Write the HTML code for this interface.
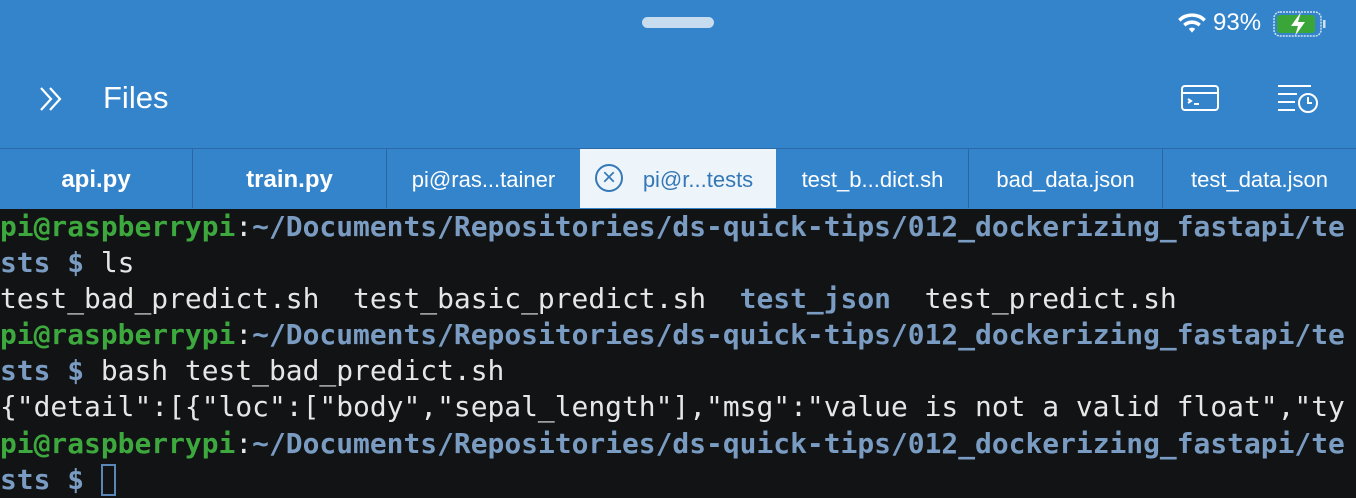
<!DOCTYPE html>
<html><head><style>
body{margin:0;width:1356px;height:495px;overflow:hidden;background:#111314;font-family:"Liberation Sans",sans-serif}
.top{position:absolute;left:0;top:0;width:1356px;height:148px;background:#3484cc}
.handle{position:absolute;left:642px;top:17px;width:72px;height:11px;border-radius:6px;background:#c8dcf0}
.files{position:absolute;left:103px;top:80px;color:#fff;font-size:31px}
.status{position:absolute;left:1213px;top:9px;color:#fff;font-size:24px}
.tabs{position:absolute;left:0;top:148px;width:1356px;height:60px;background:#3484cc;border-top:1px solid #2a6aa6}
.tab{position:absolute;top:0;height:59px;line-height:61px;text-align:center;color:#fff;font-size:22px;border-right:1px solid #2b66a0}
.term{position:absolute;left:0;top:209px;font-family:"DejaVu Sans Mono","Liberation Mono",monospace;font-size:27.93px;line-height:36.1px;color:#e6e6e6;white-space:pre}
.g{color:#3da83d;font-weight:bold}.b{color:#7a9cc2;font-weight:bold}
</style></head><body>
<div class="top">
<div class="handle"></div>
<svg style="position:absolute;left:38px;top:86px" width="28" height="26" viewBox="0 0 28 26" fill="none" stroke="#fff" stroke-width="2.2"><path d="M3 2l10 11-10 11M12 2l10 11-10 11"/></svg>
<div class="files">Files</div>
<svg style="position:absolute;left:1176px;top:11px" width="32" height="24" viewBox="0 0 30 22" fill="#fff"><path d="M15 20l3-3.5a4.5 4.5 0 0 0-6 0z"/><path d="M15 8.5a12 12 0 0 1 8.3 3.3l-2.2 2.5a9 9 0 0 0-12.2 0l-2.2-2.5A12 12 0 0 1 15 8.5z"/><path d="M15 2a18.5 18.5 0 0 1 13 5.2l-2.2 2.5a15 15 0 0 0-21.6 0L2 7.2A18.5 18.5 0 0 1 15 2z"/></svg>
<div class="status">93%</div>
<svg style="position:absolute;left:1273px;top:11px" width="54" height="26" viewBox="0 0 54 26"><rect x="1" y="1" width="47" height="24" rx="6" fill="none" stroke="#cfe0f0" stroke-width="1.5" stroke-dasharray="2 1"/><rect x="4" y="4" width="38" height="18" rx="3" fill="#3aa63a"/><rect x="50" y="9" width="2.5" height="8" fill="#cfe0f0"/><path d="M28 1l-10 14h7l-3 10 10-14h-7z" fill="#fff"/></svg>
<svg style="position:absolute;left:1180px;top:84px" width="40" height="28" viewBox="0 0 40 28" fill="none" stroke="#fff" stroke-width="2"><rect x="2" y="2" width="36" height="24" rx="3"/><path d="M2 9h36M8 15l3 2-3 2M14 20h5"/></svg>
<svg style="position:absolute;left:1277px;top:84px" width="42" height="30" viewBox="0 0 42 30" fill="none" stroke="#fff" stroke-width="2"><path d="M1 2h33M1 10h19M1 18h17M1 26h17"/><circle cx="31" cy="19" r="9"/><path d="M31 13v6h4"/></svg>
</div>
<div class="tabs">
<div class="tab" style="left:0;width:192px;font-size:24px;font-weight:bold;">api.py</div>
<div class="tab" style="left:193px;width:193px;font-size:24px;font-weight:bold;">train.py</div>
<div class="tab" style="left:387px;width:193px">pi@ras...tainer</div>
<div class="tab" style="left:580px;width:196px;background:#eef5fa;color:#3478b8;border-right:none"><span style="position:absolute;left:15px;top:15px;width:28px;height:28px;border:2px solid #3478b8;border-radius:50%;box-sizing:border-box;line-height:23px;font-size:24px;text-align:center">×</span><span style="margin-left:40px">pi@r...tests</span></div>
<div class="tab" style="left:777px;width:191px">test_b...dict.sh</div>
<div class="tab" style="left:969px;width:193px">bad_data.json</div>
<div class="tab" style="left:1163px;width:193px;border-right:none">test_data.json</div>
</div>
<div class="term"><span class="g">pi@raspberrypi</span>:<span class="b">~/Documents/Repositories/ds-quick-tips/012_dockerizing_fastapi/te</span>
<span class="b">sts $</span> ls
test_bad_predict.sh  test_basic_predict.sh  <span class="b">test_json</span>  test_predict.sh
<span class="g">pi@raspberrypi</span>:<span class="b">~/Documents/Repositories/ds-quick-tips/012_dockerizing_fastapi/te</span>
<span class="b">sts $</span> bash test_bad_predict.sh
{"detail":[{"loc":["body","sepal_length"],"msg":"value is not a valid float","ty
<span class="g">pi@raspberrypi</span>:<span class="b">~/Documents/Repositories/ds-quick-tips/012_dockerizing_fastapi/te</span>
<span class="b">sts $</span> <span style="display:inline-block;width:15px;height:32px;border:2px solid #5a86b8;box-sizing:border-box;vertical-align:-7px"></span></div>
</body></html>
